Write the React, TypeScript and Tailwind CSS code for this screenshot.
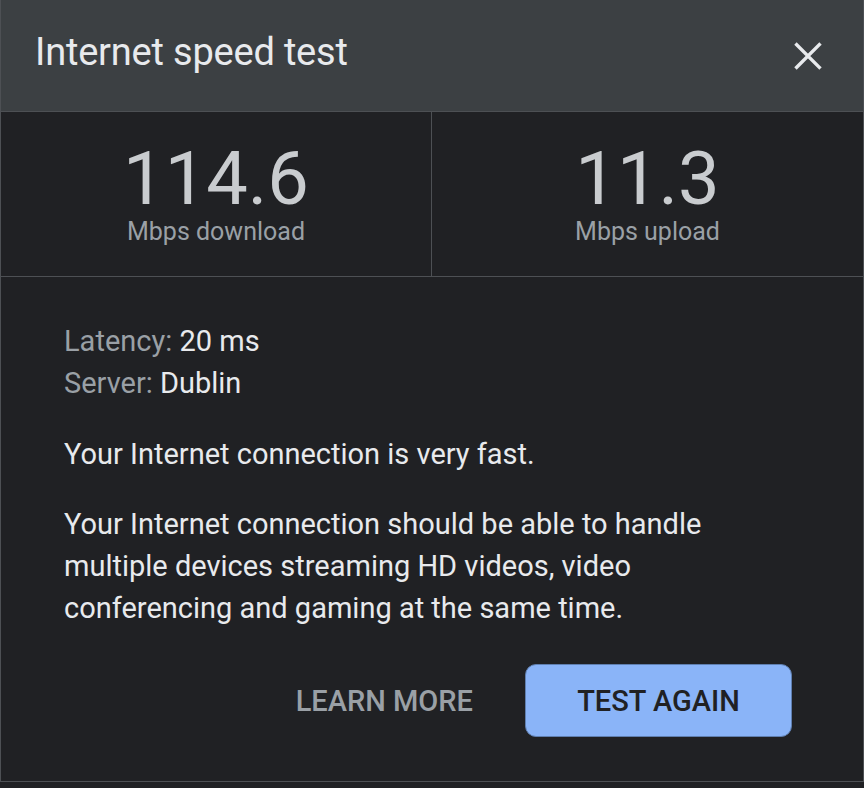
import React from 'react'

export default function App() {
  return (
    <div className="w-[864px] h-[788px] bg-[#202124] font-['Roboto',sans-serif] overflow-hidden">
      <div className="border-x border-[#4d5054] h-[782px] border-b">
        <div className="flex items-center justify-between h-[112px] bg-[#3c4043] pl-[34px] pr-[38px] border-b border-[#4d5054]">
          <h1 className="text-[38px] text-[#e8eaed] tracking-[-0.2px] pb-[6px]">Internet speed test</h1>
          <svg width="34" height="34" viewBox="0 0 24 24" className="text-[#e8eaed]">
            <path d="M4 4 L20 20 M20 4 L4 20" stroke="currentColor" strokeWidth="2.4" strokeLinecap="square" />
          </svg>
        </div>
        <div className="grid grid-cols-[431px_1fr] h-[165px] border-b border-[#4d5054]">
          <div className="flex flex-col items-center justify-center border-r border-[#4d5054]">
            <div className="text-[74px] leading-[74px] text-[#c9cccf]">114.6</div>
            <div className="text-[25px] leading-[28px] text-[#9aa0a6] mt-[2px]">Mbps download</div>
          </div>
          <div className="flex flex-col items-center justify-center">
            <div className="text-[74px] leading-[74px] text-[#c9cccf]">11.3</div>
            <div className="text-[25px] leading-[28px] text-[#9aa0a6] mt-[2px]">Mbps upload</div>
          </div>
        </div>
        <div className="pl-[63px] pr-[70px] pt-[43px] text-[29px] leading-[42px]">
          <div className="text-[#9aa0a6]">
            Latency: <span className="text-[#e8eaed]">20 ms</span>
          </div>
          <div className="text-[#9aa0a6]">
            Server: <span className="text-[#e8eaed]">Dublin</span>
          </div>
          <p className="text-[#e8eaed] mt-[29px]">Your Internet connection is very fast.</p>
          <p className="text-[#e8eaed] mt-[28px] max-w-[700px]">
            Your Internet connection should be able to handle multiple devices streaming HD videos, video
            conferencing and gaming at the same time.
          </p>
          <div className="flex items-center justify-end gap-[52px] mt-[35px]">
            <button className="text-[29px] font-medium text-[#9aa0a6]">LEARN MORE</button>
            <button className="w-[267px] h-[73px] rounded-[11px] bg-[#8ab4f8] border border-[#5f7fb0] text-[29px] font-medium text-[#202124] mr-[1px]">
              TEST AGAIN
            </button>
          </div>
        </div>
      </div>
    </div>
  )
}
